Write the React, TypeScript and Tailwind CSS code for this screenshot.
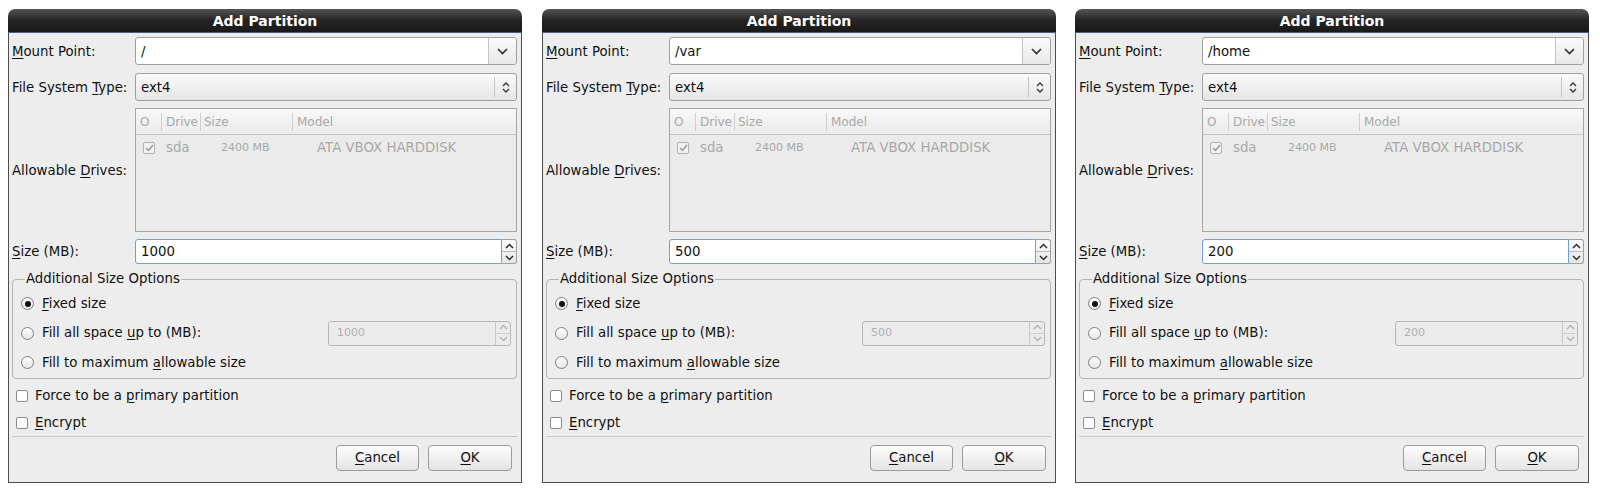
import React from "react";

type DialogProps = {
  mount: string;
  size: string;
  className?: string;
};

// underlined mnemonic letter, GTK style
function M({ children }: { children: React.ReactNode }) {
  return <span className="underline underline-offset-[2px] decoration-1">{children}</span>;
}

function ChevronDown({ color = "#2e2e2e" }: { color?: string }) {
  return (
    <svg width="11" height="7" viewBox="0 0 11 7">
      <polyline points="1,1 5.5,5.5 10,1" fill="none" stroke={color} strokeWidth="1.6" />
    </svg>
  );
}

function ChevronUp({ color = "#2e2e2e" }: { color?: string }) {
  return (
    <svg width="9" height="6" viewBox="0 0 9 6">
      <polyline points="1,5 4.5,1.5 8,5" fill="none" stroke={color} strokeWidth="1.5" />
    </svg>
  );
}

function ChevronDownSmall({ color = "#2e2e2e" }: { color?: string }) {
  return (
    <svg width="9" height="6" viewBox="0 0 9 6">
      <polyline points="1,1 4.5,4.5 8,1" fill="none" stroke={color} strokeWidth="1.5" />
    </svg>
  );
}

function UpDown() {
  return (
    <svg width="8" height="13" viewBox="0 0 8 13">
      <polyline points="1,5 4,2 7,5" fill="none" stroke="#333" strokeWidth="1.3" />
      <polyline points="1,8 4,11 7,8" fill="none" stroke="#333" strokeWidth="1.3" />
    </svg>
  );
}

function Radio({ checked }: { checked?: boolean }) {
  return (
    <div className="w-[13px] h-[13px] rounded-full border border-[#7f7f7f] bg-linear-to-b from-[#ffffff] to-[#e6e6e6] flex items-center justify-center shrink-0">
      {checked && <div className="w-[6px] h-[6px] rounded-full bg-[#111]" />}
    </div>
  );
}

function Check() {
  return <div className="w-[12px] h-[12px] rounded-[2px] border border-[#8c8c8c] bg-white shrink-0" />;
}

function Dialog({ mount, size, className = "" }: DialogProps) {
  return (
    <div className={`w-[514px] flex flex-col shrink-0 ${className}`}>
      {/* title bar */}
      <div className="h-[24px] pt-[2px] rounded-t-[7px] bg-linear-to-b from-[#555555] via-[#242424] to-[#191919] border-b border-[#46607e] flex items-center justify-center text-white font-bold text-[14px]">
        Add Partition
      </div>

      {/* body */}
      <div className="h-[450px] bg-[#ededed] border-x border-b border-[#4d4d4d] pl-[3px] pr-[4px] pt-[4px] flex flex-col">
        {/* mount point */}
        <div className="h-[28px] flex items-center">
          <div className="w-[123px] pt-[2px]">
            <M>M</M>ount Point:
          </div>
          <div className="flex-1 h-[28px] flex rounded-[3px] border border-[#a0a0a0] bg-white">
            <div className="flex-1 pl-[5px] pt-[2px] flex items-center">{mount}</div>
            <div className="w-[28px] border-l border-[#c4c4c4] bg-linear-to-b from-[#fbfbfb] to-[#e9e9e9] rounded-r-[3px] flex items-center justify-center">
              <ChevronDown />
            </div>
          </div>
        </div>

        {/* file system type */}
        <div className="h-[28px] mt-[8px] flex items-center">
          <div className="w-[123px] pt-[1px]">
            File System <M>T</M>ype:
          </div>
          <div className="flex-1 h-[28px] flex items-center rounded-[3px] border border-[#a0a0a0] bg-linear-to-b from-[#fafafa] to-[#e6e6e6]">
            <div className="flex-1 pl-[5px] pt-[1px]">ext4</div>
            <div className="w-px h-[20px] bg-[#c4c4c4]" />
            <div className="w-[21px] flex items-center justify-center">
              <UpDown />
            </div>
          </div>
        </div>

        {/* drives */}
        <div className="h-[124px] mt-[7px] flex items-center">
          <div className="w-[123px] pt-[1px]">
            Allowable <M>D</M>rives:
          </div>
          <div className="flex-1 h-[124px] border border-[#a6a6a6] bg-[#ebebeb] flex flex-col text-[#a8a8a8]">
            <div className="h-[26px] flex items-center border-b border-[#c6c6c6] bg-linear-to-b from-[#f8f8f8] to-[#ebebeb] text-[12px]">
              <div className="w-[26px] pl-[4px] border-r border-[#cfcfcf] h-[18px] flex items-center">O</div>
              <div className="w-[39px] pl-[4px] border-r border-[#cfcfcf] h-[18px] flex items-center overflow-hidden">Drive</div>
              <div className="w-[92px] pl-[3px] border-r border-[#cfcfcf] h-[18px] flex items-center">Size</div>
              <div className="pl-[4px]">Model</div>
            </div>
            <div className="h-[26px] flex items-center">
              <div className="w-[26px] pl-[7px]">
                <div className="w-[12px] h-[12px] border border-[#b2b2b2] bg-[#f2f2f2] rounded-[2px] flex items-center justify-center">
                  <svg width="9" height="8" viewBox="0 0 9 8">
                    <polyline points="1,4 3.5,6.5 8,1" fill="none" stroke="#9a9a9a" strokeWidth="1.5" />
                  </svg>
                </div>
              </div>
              <div className="w-[39px] pl-[4px]">sda</div>
              <div className="w-[92px] pl-[20px] text-[11px]">2400 MB</div>
              <div className="pl-[24px]">ATA VBOX HARDDISK</div>
            </div>
          </div>
        </div>

        {/* size */}
        <div className="h-[25px] mt-[7px] flex items-center">
          <div className="w-[123px]">
            <M>S</M>ize (MB):
          </div>
          <div className="flex-1 h-[25px] flex">
            <div className="flex-1 bg-white border border-[#6f9fd6] rounded-l-[3px] pl-[5px] flex items-center">{size}</div>
            <div className="w-[15px] flex flex-col border border-l-0 border-[#a0a0a0] rounded-r-[3px] bg-linear-to-b from-[#fafafa] to-[#e6e6e6]">
              <div className="flex-1 flex items-center justify-center border-b border-[#bdbdbd]">
                <ChevronUp />
              </div>
              <div className="flex-1 flex items-center justify-center">
                <ChevronDownSmall />
              </div>
            </div>
          </div>
        </div>

        {/* additional size options */}
        <fieldset className="mt-[7px] border border-[#b4b4b4] rounded-[4px] pt-[2px] pb-[1px] pl-[8px] pr-[5px]">
          <legend className="ml-[4px] px-[1px] leading-[16px]">Additional Size Options</legend>
          <div className="h-[29px] flex items-center gap-[8px]">
            <Radio checked />
            <span>
              <M>F</M>ixed size
            </span>
          </div>
          <div className="h-[30px] flex items-center gap-[8px]">
            <Radio />
            <span>
              Fill all space <M>u</M>p to (MB):
            </span>
            <div className="ml-auto w-[183px] h-[25px] flex rounded-[3px] border border-[#b8b8b8] bg-[#ebebeb]">
              <div className="flex-1 pl-[8px] flex items-center text-[11px] text-[#b0b0b0]">{size}</div>
              <div className="w-[15px] flex flex-col border-l border-[#c8c8c8]">
                <div className="flex-1 flex items-center justify-center border-b border-[#d0d0d0]">
                  <ChevronUp color="#b5b5b5" />
                </div>
                <div className="flex-1 flex items-center justify-center">
                  <ChevronDownSmall color="#b5b5b5" />
                </div>
              </div>
            </div>
          </div>
          <div className="h-[29px] flex items-center gap-[8px]">
            <Radio />
            <span>
              Fill to maximum <M>a</M>llowable size
            </span>
          </div>
        </fieldset>

        {/* checkboxes */}
        <div className="mt-[3px] h-[27px] flex items-center gap-[7px] pl-[4px]">
          <Check />
          <span>
            Force to be a <M>p</M>rimary partition
          </span>
        </div>
        <div className="h-[27px] flex items-center gap-[7px] pl-[4px]">
          <Check />
          <span>
            <M>E</M>ncrypt
          </span>
        </div>

        <div className="h-px bg-[#c9c9c9]" />

        {/* buttons */}
        <div className="mt-[8px] h-[26px] flex justify-end gap-[9px] pr-[5px]">
          <button className="w-[83px] h-[26px] rounded-[4px] border border-[#9c9c9c] bg-linear-to-b from-[#fdfdfd] to-[#e4e4e4] flex items-center justify-center">
            <span>
              <M>C</M>ancel
            </span>
          </button>
          <button className="w-[84px] h-[26px] rounded-[4px] border border-[#9c9c9c] bg-linear-to-b from-[#fdfdfd] to-[#e4e4e4] flex items-center justify-center">
            <span>
              <M>O</M>K
            </span>
          </button>
        </div>
      </div>
    </div>
  );
}

export default function App() {
  return (
    <div className="w-[1600px] h-[493px] bg-white pt-[9px] pl-[8px] flex font-['DejaVu_Sans',sans-serif] text-[13.3px] text-[#111]">
      <Dialog mount="/" size="1000" />
      <Dialog mount="/var" size="500" className="ml-[20px]" />
      <Dialog mount="/home" size="200" className="ml-[19px]" />
    </div>
  );
}
